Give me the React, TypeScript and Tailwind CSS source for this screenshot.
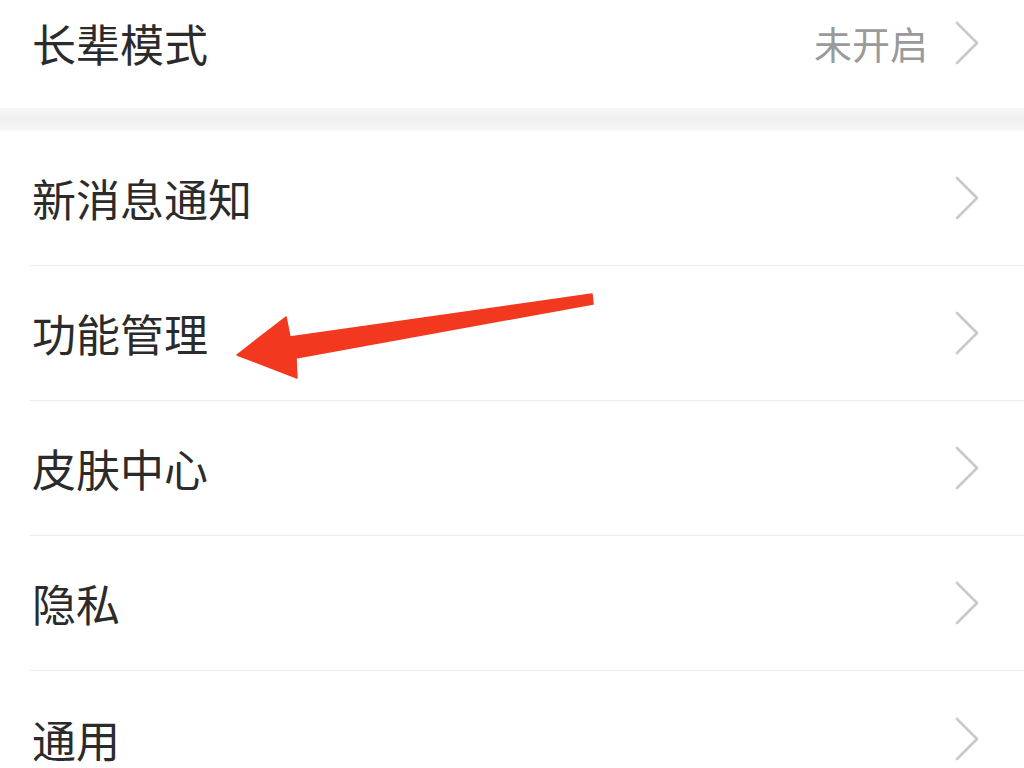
import React from "react";

const font = { fontFamily: '"Noto Sans CJK SC", "Noto Sans", sans-serif' };

function Chevron() {
  return (
    <svg width="26" height="44" viewBox="0 0 26 44" className="shrink-0">
      <path d="M3 2 L23 22 L3 42" fill="none" stroke="#c9c9c9" strokeWidth="2.6" strokeLinecap="round" strokeLinejoin="round" />
    </svg>
  );
}

function Row({ label, last }: { label: string; last?: boolean }) {
  return (
    <div className="pl-[30px]">
      <div className={`h-[135px] flex items-center justify-between pr-[44px] ${last ? "" : "border-b border-[#ececec]"}`}>
        <span className="text-[44px] leading-none text-[#2b2b2b] pl-[2px]">{label}</span>
        <Chevron />
      </div>
    </div>
  );
}

export default function App() {
  const rows = ["新消息通知", "功能管理", "皮肤中心", "隐私", "通用"];
  return (
    <div className="relative w-[1024px] h-[768px] overflow-hidden bg-white" style={font}>
      {/* elder mode row, cut at the top */}
      <div className="h-[108px] flex items-center justify-between pl-[32px] pr-[44px] pb-[22px]">
        <span className="text-[44px] leading-none text-[#2b2b2b]">长辈模式</span>
        <div className="flex items-center gap-[26px]">
          <span className="text-[38px] leading-none text-[#9a9a9a]">未开启</span>
          <Chevron />
        </div>
      </div>

      {/* section gap */}
      <div className="h-[23px] bg-gradient-to-b from-[#f7f7f7] via-[#efefef] to-[#f8f8f8]" />

      <div className="flex flex-col">
        {rows.map((r, i) => (
          <Row key={r} label={r} last={i === rows.length - 1} />
        ))}
      </div>

      {/* red annotation arrow */}
      <svg className="absolute left-0 top-0 pointer-events-none" width="1024" height="768" viewBox="0 0 1024 768">
        <polygon
          points="237,355 286,317 290,337 592,294 593,304 296,358 297,378"
          fill="#f2391f"
          stroke="#f2391f"
          strokeWidth="1.5"
          strokeLinejoin="round"
        />
      </svg>
    </div>
  );
}
